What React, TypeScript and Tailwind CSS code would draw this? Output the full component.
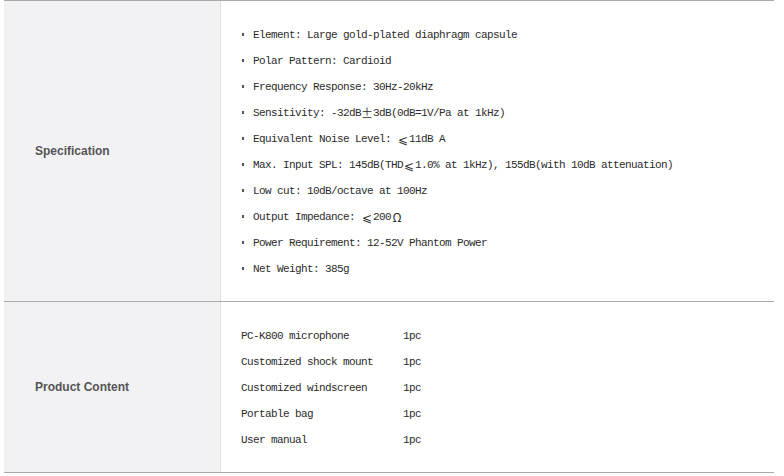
const specs: string[] = [
  "Element: Large gold-plated diaphragm capsule",
  "Polar Pattern: Cardioid",
  "Frequency Response: 30Hz-20kHz",
  "Sensitivity: -32dB±3dB(0dB=1V/Pa at 1kHz)",
  "Equivalent Noise Level: ≤11dB A",
  "Max. Input SPL: 145dB(THD≤1.0% at 1kHz), 155dB(with 10dB attenuation)",
  "Low cut: 10dB/octave at 100Hz",
  "Output Impedance: ≤200Ω",
  "Power Requirement: 12-52V Phantom Power",
  "Net Weight: 385g",
];

const contents: string[] = [
  "PC-K800 microphone",
  "Customized shock mount",
  "Customized windscreen",
  "Portable bag",
  "User manual",
];

// full-width glyphs take two cells in the original font
const Mono = ({ text }: { text: string }) => (
  <>
    {text.split(/([±≤Ω])/).map((part, i) =>
      /^[±≤Ω]$/.test(part) ? (
        <span key={i} className="inline-block w-[12px] text-center tracking-normal text-[12px] font-['Noto_Sans_CJK_SC',sans-serif]">
          {part === "≤" ? "⩽" : part}
        </span>
      ) : (
        <span key={i}>{part}</span>
      )
    )}
  </>
);

const Label = ({ children }: { children: string }) => (
  <div className="flex items-center bg-[#f2f2f4] border-r border-r-[#e2e2e2] pl-[31px] text-[12px] font-bold text-[#555] font-['Liberation_Sans',Arial,sans-serif]">
    {children}
  </div>
);

const App = () => {
  return (
    <div className="w-[784px] h-[476px] bg-white pl-[4px]">
      <div className="w-[770px] border-t border-t-[#a9a9a9]">
        <div className="grid grid-cols-[217px_1fr] border-b border-b-[#a9a9a9] h-[301px]">
          <Label>Specification</Label>
          <div className="pt-[21px] pl-[20px] text-[11px] tracking-[-0.6px] leading-[26px] text-[#2b2b2b] font-['Liberation_Mono',monospace]">
            {specs.map((s, i) => (
              <div key={i} className="flex items-center h-[26px] whitespace-pre">
                <span className="inline-flex w-[12px] pl-[1px] pb-[2px]">
                  <span className="block w-[2px] h-[3px] bg-[#555]"></span>
                </span>
                <Mono text={s} />
              </div>
            ))}
          </div>
        </div>
        <div className="grid grid-cols-[217px_1fr] border-b border-b-[#a9a9a9] h-[171px]">
          <Label>Product Content</Label>
          <div className="pt-[21px] pl-[20px] text-[11px] tracking-[-0.6px] leading-[26px] text-[#2b2b2b] font-['Liberation_Mono',monospace]">
            {contents.map((c, i) => (
              <div key={i} className="grid grid-cols-[162px_1fr] h-[26px] items-center whitespace-pre">
                <span>{c}</span>
                <span>1pc</span>
              </div>
            ))}
          </div>
        </div>
      </div>
    </div>
  );
};

export default App;
